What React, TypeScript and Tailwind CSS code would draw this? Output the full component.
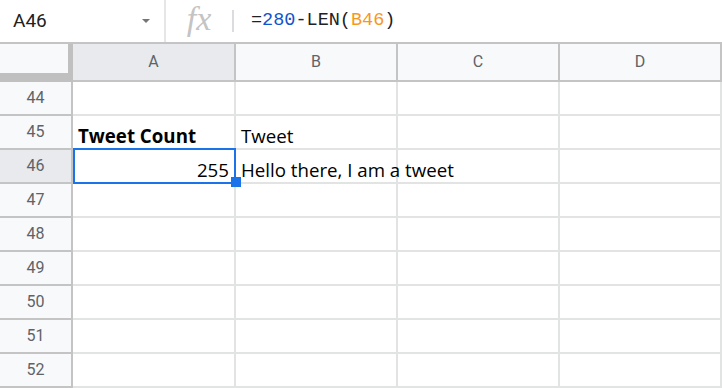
import React from "react"

const rows = [44, 45, 46, 47, 48, 49, 50, 51, 52]
const cols = ["A", "B", "C", "D"]

function Cell({ children, className = "", wide = false }: { children?: React.ReactNode; className?: string; wide?: boolean }) {
  return (
    <div
      className={`${wide ? "w-[163px]" : "w-[162px]"} shrink-0 h-full border-r-2 border-[#e2e3e3] flex items-end px-[5px] pb-[2px] text-[18.7px] leading-none text-black whitespace-nowrap ${className}`}
      style={{ fontFamily: '"Open Sans", sans-serif' }}
    >
      {children}
    </div>
  )
}

export default function App() {
  return (
    <div className="w-[722px] h-[388px] overflow-hidden bg-white select-none" style={{ fontFamily: "Roboto, Arial, sans-serif" }}>
      {/* formula bar */}
      <div className="flex h-[42px] items-center">
        <div className="w-[166px] h-full flex items-center justify-between pl-[13px] pr-[14px] border-r-2 border-[#e6e6e6]">
          <span className="text-[19px] text-[#202124]">A46</span>
          <span className="w-0 h-0 border-l-[4px] border-r-[4px] border-t-[4px] border-l-transparent border-r-transparent border-t-[#757575]" />
        </div>
        <div className="w-[66px] h-[20px] flex items-center justify-center">
          <span className="text-[34px] italic text-[#c4c4c4] leading-none -mt-[4px]" style={{ fontFamily: '"Liberation Serif", serif' }}>
            fx
          </span>
        </div>
        <div className="w-[2px] h-[22px] bg-[#dadce0]" />
        <div className="pl-[17px] text-[18.5px] text-[#202124]" style={{ fontFamily: '"Liberation Mono", monospace' }}>
          =<span className="text-[#1155cc]">280</span>-LEN(<span className="text-[#f7981d]">B46</span>)
        </div>
      </div>
      <div className="h-[2px] bg-[#c4c4c4]" />

      {/* column headers */}
      <div className="flex h-[38px]">
        <div className="w-[73px] shrink-0 h-full bg-[#f8f9fa] border-r-[5px] border-b-[9px] border-[#c0c0c0]" />
        {cols.map((c, i) => (
          <div
            key={c}
            className={`${i === 0 ? "w-[163px] bg-[#e8eaed]" : "w-[162px] bg-[#f8f9fa]"} shrink-0 h-full border-r-2 border-b-2 border-[#c4c4c4] flex items-center justify-center text-[16px] text-[#5f6368]`}
          >
            {c}
          </div>
        ))}
      </div>

      {/* body */}
      {rows.map((r) => (
        <div key={r} className="flex h-[34px] border-b-2 border-[#e2e3e3]">
          <div
            className={`w-[73px] shrink-0 h-[34px] -mb-[2px] border-r-2 border-b-2 border-[#c4c4c4] flex items-center justify-center text-[16px] text-[#5f6368] ${
              r === 46 ? "bg-[#e8eaed]" : "bg-[#f8f9fa]"
            }`}
          >
            {r}
          </div>
          {r === 45 ? (
            <>
              <Cell wide className="font-bold">Tweet Count</Cell>
              <Cell>Tweet</Cell>
              <Cell />
              <Cell />
            </>
          ) : r === 46 ? (
            <>
              <div className="relative w-[163px] shrink-0 h-full">
                <Cell wide className="justify-end">255</Cell>
                <div className="absolute -top-[2px] left-0 w-[163px] h-[36px] border-2 border-[#1a73e8] pointer-events-none" />
                <div className="absolute right-[-5px] bottom-[-5px] w-[10px] h-[10px] bg-[#1a73e8]" />
              </div>
              <Cell>Hello there, I am a tweet</Cell>
              <Cell />
              <Cell />
            </>
          ) : (
            <>
              <Cell wide />
              <Cell />
              <Cell />
              <Cell />
            </>
          )}
        </div>
      ))}
    </div>
  )
}
